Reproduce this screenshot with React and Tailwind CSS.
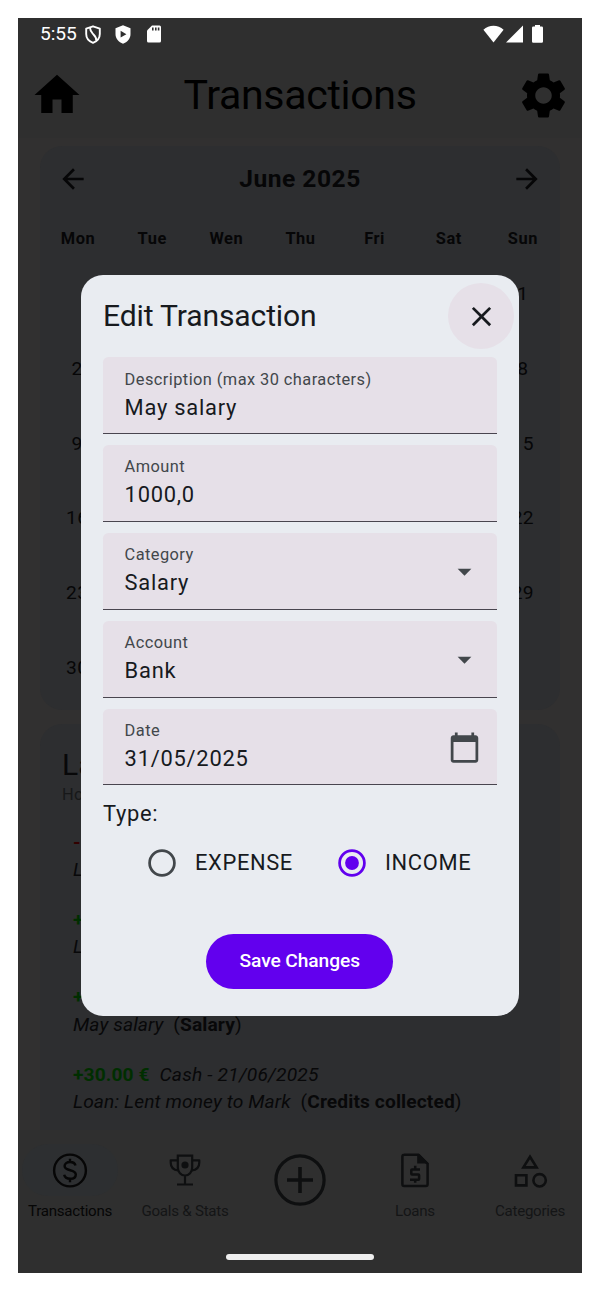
import {
  MdHome, MdSettings, MdArrowBack, MdArrowForward, MdClose, MdArrowDropDown,
} from 'react-icons/md';

const WEEKDAYS = ['Mon', 'Tue', 'Wen', 'Thu', 'Fri', 'Sat', 'Sun'];
const WEEKS = [
  [null, null, null, null, null, null, 1],
  [2, null, null, null, null, null, 8],
  [9, null, null, null, null, null, 15],
  [16, null, null, null, null, null, 22],
  [23, null, null, null, null, null, 29],
  [30, null, null, null, null, null, null],
];

function StatusBar() {
  return (
    <div className="flex h-[33px] items-center pl-[22px] pr-[39px] pb-[1px] text-white">
      <span className="w-[45px] text-[19.2px] leading-[32px] tracking-[-0.1px]">5:55</span>
      <svg className="h-[19px] w-[16px]" viewBox="0 0 16 19" fill="none" stroke="currentColor" strokeWidth="1.9">
        <path d="M8 1.3 14.8 3.6V9C14.8 13 12 16.3 8 17.8C4 16.3 1.2 13 1.2 9V3.6Z" strokeLinejoin="round" />
        <path d="M5 2.6C5 6.500 6.500 7.500 8.500 9.500C11 12 11.500 13.500 11.200 15.500" />
      </svg>
      <svg className="ml-[14px] h-[19px] w-[16px]" viewBox="0 0 16 19">
        <path fill="currentColor" d="M8 .3 15.500 3.200V9C15.500 13.500 12.300 17.400 8 18.700C3.700 17.400 .5 13.500 .5 9V3.200Z" />
        <path fill="#2f2f2f" d="M5.600 5.800 11.400 9.200 5.600 12.600Z" />
      </svg>
      <svg className="ml-[16px] h-[18px] w-[14px]" viewBox="0 0 14 18">
        <path fill="currentColor" d="M5 .5H12.500Q14 .5 14 2V16Q14 17.500 12.500 17.500H1.500Q0 17.500 0 16V5.500Z" />
        <path fill="#2f2f2f" d="M5 2.500h1.600v3H5zM8 2.500h1.600v3H8zM10.800 2.500h1.600v3h-1.600z" />
      </svg>
      <svg className="ml-auto h-[18px] w-[21px]" viewBox="0 0 21 18" fill="currentColor">
        <path d="M10.500 17.500 .4 4.800C6 -.6 15 -.6 20.600 4.800Z" />
      </svg>
      <svg className="ml-[2px] h-[18px] w-[17px]" viewBox="0 0 17 18" fill="currentColor">
        <path d="M17 .5V17.500H0Z" />
      </svg>
      <svg className="ml-[9px] h-[18px] w-[11px]" viewBox="0 0 11 18" fill="currentColor">
        <path d="M3 0H8V1.500H9.700Q11 1.500 11 2.800V16.500Q11 17.800 9.700 17.800H1.300Q0 17.800 0 16.500V2.800Q0 1.500 1.300 1.500H3Z" />
      </svg>
    </div>
  );
}

function Header() {
  return (
    <header className="flex h-[89px] items-center justify-between pl-[12px] pr-[11px] text-black">
      <MdHome className="mb-[1px] size-[54px]" />
      <h1 className="text-[41.1px] leading-none tracking-[-0.33px]">Transactions</h1>
      <MdSettings className="mb-[1px] size-[55px]" />
    </header>
  );
}

function Calendar() {
  return (
    <section className="h-[564px] shrink-0 rounded-[22px] bg-[#2d2e30] text-[#060607]">
      <div className="flex h-[66px] items-center justify-between px-[17px]">
        <MdArrowBack className="mb-[1px] size-[32px]" />
        <span className="text-[24.600px] font-bold tracking-[0.5px]">June 2025</span>
        <MdArrowForward className="mb-[1px] size-[32px]" />
      </div>
      <div className="grid h-[45px] grid-cols-7 items-center pl-[1px] pt-[10px] text-center text-[16.400px] font-bold tracking-[0.55px]">
        {WEEKDAYS.map((d) => <span key={d}>{d}</span>)}
      </div>
      {WEEKS.map((week, i) => (
        <div key={i} className="grid h-[74.700px] grid-cols-7 items-center pt-[0.500px] text-center text-[19.200px] tracking-[0.34px]">
          {week.map((d, j) => <span key={j}>{d}</span>)}
        </div>
      ))}
    </section>
  );
}

function Entry({ amount, color, source, note, category }) {
  return (
    <div className="h-[77.300px] text-[19.200px] leading-[27.500px] tracking-[0.11px] whitespace-pre">
      <p><span className={`font-bold ${color}`}>{amount}</span>{source && <i className="tracking-[0.2px]">{'  ' + source}</i>}</p>
      <p><i>{note}</i>{category && <>{'  ('}<b>{category}</b>)</>}</p>
    </div>
  );
}

function Transactions() {
  return (
    <section className="h-[406px] shrink-0 overflow-hidden rounded-t-[22px] bg-[#2d2e30] text-[#080809]">
      <h2 className="pl-[22px] pt-[22px] text-[30.100px] leading-[38px]">Last</h2>
      <p className="h-[44.700px] pl-[22px] pt-[1px] text-[16.400px] leading-[20px] tracking-[0.41px] text-[#171819]">Hold</p>
      <div className="pl-[33px]">
        <Entry amount="-" color="text-[#330000]" note="L" />
        <Entry amount="+" color="text-[#002e00]" note="L" />
        <Entry amount="+" color="text-[#002e00]" note="May salary" category="Salary" />
        <Entry amount="+30.00 €" color="text-[#002e00]" source="Cash - 21/06/2025" note="Loan: Lent money to Mark" category="Credits collected" />
      </div>
    </section>
  );
}

function NavItem({ label, active, children }) {
  return (
    <div className={`flex flex-1 flex-col items-center pt-[14px] ${active ? 'text-[#060606]' : 'text-[#0e0f10]'}`}>
      <div className={`flex h-[52px] w-[96px] items-center justify-center rounded-full ${active ? 'bg-[#2d2f31]' : ''}`}>
        {children}
      </div>
      <span className={`mt-[6px] text-[15.100px] leading-[18px] tracking-[-0.25px] whitespace-nowrap ${active ? '' : 'text-[#141516]'}`}>{label}</span>
    </div>
  );
}

function BottomNav() {
  return (
    <nav className="flex h-[143px] shrink-0 flex-col items-center bg-[#2f2f2f]">
      <div className="flex w-full flex-1 gap-[11px]">
        <NavItem label="Transactions" active>
          <svg className="size-[36px]" viewBox="0 0 36 36" fill="none" stroke="currentColor" strokeWidth="2.4">
            <circle cx="18" cy="18.500" r="15.900" />
            <path d="M23.500 13.500C23 11.300 20.800 10 18 10C14.900 10 12.600 11.600 12.600 14.100C12.600 19.800 23.800 16.600 23.800 22.500C23.800 25.300 21.300 26.800 18.200 26.800C15 26.800 12.700 25.300 12.200 22.800M18 6.800V10M18 26.800V30.200" />
          </svg>
        </NavItem>
        <NavItem label="Goals & Stats">
          <svg className="size-[34px]" viewBox="0 0 34 34" fill="none" stroke="currentColor" strokeWidth="2.200">
            <path d="M9.800 2.600H24.200V14.500C24.200 19 21 22.500 17 22.500S9.800 19 9.800 14.500ZM17 22.500V31.500M9 31.500H25" />
            <path d="M9.800 7.300H2.700V9.500C2.700 14 5.500 17 10.300 17.300M24.200 7.300H31.300V9.500C31.300 14 28.500 17 23.700 17.300" strokeLinejoin="round" />
            <circle cx="17" cy="12" r="3.600" fill="currentColor" stroke="none" />
          </svg>
        </NavItem>
        <div className="flex flex-1 justify-center pt-[23px] text-[#0e0f10]">
          <svg className="size-[54px]" viewBox="0 0 54 54" fill="none" stroke="currentColor" strokeWidth="3.200">
            <circle cx="27" cy="27" r="24.100" />
            <path d="M14 27H40M27 14V40" strokeWidth="3.600" />
          </svg>
        </div>
        <NavItem label="Loans">
          <svg className="size-[36px]" viewBox="0 0 36 36" fill="none" stroke="currentColor" strokeWidth="2.500">
            <path d="M7 2.800H21.300L30.600 11.800V32.200Q30.600 34 28.800 34H7.200Q5.400 34 5.400 32.200V4.600Q5.400 2.800 7.200 2.800Z" />
            <path d="M20.200 2H22.400L31.500 11.600H20.200Z" fill="currentColor" stroke="none" />
            <path d="M23 17.400H15Q14.300 17.400 14.300 18V21.800Q14.300 22.500 15 22.500H21.400Q22.100 22.500 22.100 23.200V27Q22.100 27.700 21.400 27.700H13M18.200 13.700V17M18.200 27.700V30.800" strokeWidth="2.500" />
          </svg>
        </NavItem>
        <NavItem label="Categories">
          <svg className="size-[36px]" viewBox="0 0 36 36" fill="none" stroke="currentColor" strokeWidth="2.600">
            <path d="M18 4.700 24.600 15.400H11.400Z" />
            <path d="M4 23.200H14.400V33.400H4Z" />
            <circle cx="27.600" cy="28.300" r="6.200" />
          </svg>
        </NavItem>
      </div>
      <div className="mb-[13.500px] h-[6px] w-[148px] rounded-full bg-[#efefef]" />
    </nav>
  );
}

function Field({ label, value, children }) {
  return (
    <div className="mb-[11.200px] flex h-[76.700px] items-center justify-between rounded-t-[5.500px] border-b-[1.400px] border-[#49454f] bg-[#e6e0e8] pl-[21.600px] pr-[16px] pt-[2px]">
      <div>
        <div className="text-[16.400px] leading-[22px] tracking-[0.43px] text-[#42474b]">{label}</div>
        <div className="text-[21.900px] leading-[33px] tracking-[0.75px] text-[#171a1e]">{value}</div>
      </div>
      {children}
    </div>
  );
}

function Radio({ label, checked }) {
  return (
    <div className="flex items-center gap-[19px]">
      <svg className={`size-[28px] ${checked ? 'text-[#6200ee]' : 'text-[#42474b]'}`} viewBox="0 0 28 28" fill="none" stroke="currentColor" strokeWidth="2.740">
        <circle cx="14" cy="14" r="12.400" />
        {checked && <circle cx="14" cy="14" r="6.900" fill="currentColor" stroke="none" />}
      </svg>
      <span className="text-[21.900px] leading-[28px] tracking-[0.64px]">{label}</span>
    </div>
  );
}

function EditDialog() {
  return (
    <div className="absolute left-[63px] top-[257px] flex h-[741px] w-[438px] flex-col rounded-[22px] bg-[#e9ecf1] px-[22px] pt-[8.400px] text-[#171a1e]">
      <div className="-mr-[17px] mb-[7.800px] flex h-[66px] items-center justify-between">
        <h2 className="text-[30.100px] leading-none tracking-[-0.15px]">Edit Transaction</h2>
        <button className="flex size-[66px] items-center justify-center rounded-full bg-[#e6e0e8]">
          <MdClose className="size-[33px]" />
        </button>
      </div>
      <Field label="Description (max 30 characters)" value="May salary" />
      <Field label="Amount" value="1000,0" />
      <Field label="Category" value="Salary"><MdArrowDropDown className="size-[33px] text-[#42474b]" /></Field>
      <Field label="Account" value="Bank"><MdArrowDropDown className="size-[33px] text-[#42474b]" /></Field>
      <Field label="Date" value="31/05/2025">
        <svg className="size-[33px] text-[#42474b]" viewBox="0 0 24 24" fill="currentColor">
          <path d="M20 3h-1V1h-2v2H7V1H5v2H4c-1.100 0-2 .9-2 2v16c0 1.100.9 2 2 2h16c1.100 0 2-.9 2-2V5c0-1.100-.9-2-2-2zm0 18H4V8h16v13z" />
        </svg>
      </Field>
      <p className="mt-[0.500px] text-[21.900px] leading-[33px] tracking-[0.68px]">Type:</p>
      <div className="mt-[18.500px] flex pl-[45px]">
        <Radio label="EXPENSE" />
        <div className="ml-[45px]"><Radio label="INCOME" checked /></div>
      </div>
      <button className="mt-[57px] mr-[0.500px] h-[55px] w-[187px] self-center rounded-full bg-[#6200ee] pt-[1px] text-[19.200px] font-medium tracking-[-0.080px] text-white">Save Changes</button>
    </div>
  );
}

export default function App() {
  return (
    <main className="h-[1291px] w-[607px] bg-white p-[18px] font-['Roboto',sans-serif]">
      <div className="relative flex h-[1255px] w-[564px] flex-col overflow-hidden bg-[#313030]">
        <div className="h-[120px] shrink-0 bg-[#2f2f2f]">
          <StatusBar />
          <Header />
        </div>
        <div className="flex h-[992px] shrink-0 flex-col gap-[14px] px-[22px] pt-[8px]">
          <Calendar />
          <Transactions />
        </div>
        <BottomNav />
        <EditDialog />
      </div>
    </main>
  );
}
